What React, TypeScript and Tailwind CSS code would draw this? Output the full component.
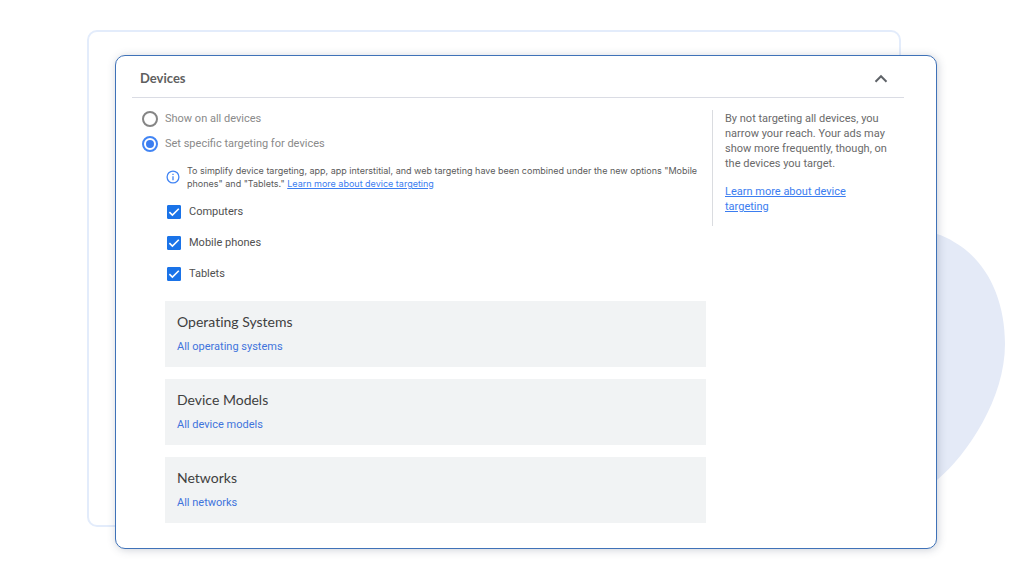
import { useState } from "react";

const deviceTypes = ["Computers", "Mobile phones", "Tablets"];

const filters = [
  { title: "Operating Systems", link: "All operating systems" },
  { title: "Device Models", link: "All device models" },
  { title: "Networks", link: "All networks" },
];

function RadioRow({ label, checked, onSelect }: { label: string; checked: boolean; onSelect: () => void }) {
  return (
    <label className="flex gap-[7px] text-[11px] leading-4 text-[#8a8a8a]">
      <span className="relative flex size-4 shrink-0">
        <input
          type="radio"
          name="targeting"
          checked={checked}
          onChange={onSelect}
          className="peer size-4 appearance-none rounded-full border-2 border-[#858585] bg-white checked:border-[#4285f4]"
        />
        <span className="pointer-events-none absolute inset-1 hidden rounded-full bg-[#3b7df0] peer-checked:block" />
      </span>
      <span>{label}</span>
    </label>
  );
}

function CheckRow({ label }: { label: string }) {
  return (
    <label className="flex h-4 items-center gap-2 text-[11px] leading-4 text-[#505050]">
      <span className="relative flex size-3.5 shrink-0">
        <input
          type="checkbox"
          defaultChecked
          className="peer size-3.5 appearance-none rounded-[1px] border border-[#757575] checked:border-[#1a73e8] checked:bg-[#1a73e8]"
        />
        <svg viewBox="0 0 14 14" className="pointer-events-none absolute inset-0 hidden peer-checked:block" fill="none" stroke="white" strokeWidth="1.6" aria-hidden="true">
          <path d="M2.4 7.2 5.4 10.1 11.8 3.8" />
        </svg>
      </span>
      <span>{label}</span>
    </label>
  );
}

export default function App() {
  const [specific, setSpecific] = useState(true);
  const [open, setOpen] = useState(true);

  return (
    <div className="relative isolate min-h-screen overflow-hidden bg-white pt-[55px] pr-[87px] pb-[30px] pl-[115px] font-['Roboto',sans-serif]">
      <div className="absolute top-[30px] right-[123px] bottom-[52px] left-[87px] -z-10 rounded-[10px] border-2 border-[#e3ecfb]" />
      <svg viewBox="0 0 90 270" className="absolute top-[228px] right-[14px] -z-10 h-[270px] w-[90px]" fill="#e4eaf7" aria-hidden="true">
        <path d="M0 0 C10 4 24 7 34 14 C66 32 85 70 85 116 C85 170 48 226 17 252 L0 264 Z" />
      </svg>

      <main className="rounded-[10px] border border-[#3f72b8] bg-white pr-8 pb-[25px] pl-4 shadow-[1px_1px_8px_rgba(60,70,100,0.25)]">
        <header className="flex h-[42px] items-center justify-between border-b border-[#dadce4] pt-1 pr-[13px] pl-2">
          <h1 className="font-['Lato',sans-serif] text-[13px] font-bold text-[#5f5f5f]">Devices</h1>
          <button type="button" aria-label="Toggle devices" aria-expanded={open} onClick={() => setOpen(!open)} className="flex size-5 items-center justify-center">
            <svg viewBox="0 0 14 14" className="size-3.5" fill="none" stroke="#5f6368" strokeWidth="2" aria-hidden="true">
              <path d="m1.5 9.7 5.5-5.5 5.5 5.5" />
            </svg>
          </button>
        </header>

        {open && (
          <div className="flex items-start pt-3">
            <div className="min-w-0 flex-1">
              <div className="flex flex-col gap-[9px] pt-px pl-[10px]">
                <RadioRow label="Show on all devices" checked={!specific} onSelect={() => setSpecific(false)} />
                <RadioRow label="Set specific targeting for devices" checked={specific} onSelect={() => setSpecific(true)} />
              </div>

              <div className="pt-3 pr-1.5 pl-[33px]">
                <p className="flex items-center gap-[7px] pl-px text-[9px] leading-[13px] text-[#5a5a5a]">
                  <svg viewBox="0 0 14 14" className="size-3.5 shrink-0" fill="none" stroke="#4285f4" strokeWidth="1.3" aria-hidden="true">
                    <circle cx="7" cy="7" r="5.9" />
                    <path d="M7 6.2v4M7 3.7v1.4" />
                  </svg>
                  <span className="font-['Inter',sans-serif]">
                    To simplify device targeting, app, app interstitial, and web targeting have been combined under the new options "Mobile phones" and "Tablets."{" "}
                    <a href="#device-targeting" className="text-[#3b7df0] underline">Learn more about device targeting</a>
                  </span>
                </p>

                <fieldset className="flex flex-col gap-[15px] pt-3.5 pl-0.5">
                  {deviceTypes.map((name) => (
                    <CheckRow key={name} label={name} />
                  ))}
                </fieldset>

                <div className="flex flex-col gap-3 pt-[19px]">
                  {filters.map((item) => (
                    <section key={item.title} className="flex h-[66px] flex-col items-start gap-2 bg-[#f1f3f4] px-3 pt-3">
                      <h2 className="font-['Lato',sans-serif] text-sm leading-[18px] text-[#404040] [font-variant-ligatures:none]">{item.title}</h2>
                      <button type="button" className="text-[11px] leading-4 text-[#3f74dc]">{item.link}</button>
                    </section>
                  ))}
                </div>
              </div>
            </div>

            <aside className="w-48 shrink-0 border-l border-[#dadce0] pt-px pb-3 pl-3 text-[11px] leading-[15px] text-[#6a6a6a]">
              <p className="pr-4">By not targeting all devices, you narrow your reach. Your ads may show more frequently, though, on the devices you target.</p>
              <p className="pt-[13px] pr-10">
                <a href="#learn-more" className="text-[#3b7df0] underline">Learn more about device targeting</a>
              </p>
            </aside>
          </div>
        )}
      </main>
    </div>
  );
}
